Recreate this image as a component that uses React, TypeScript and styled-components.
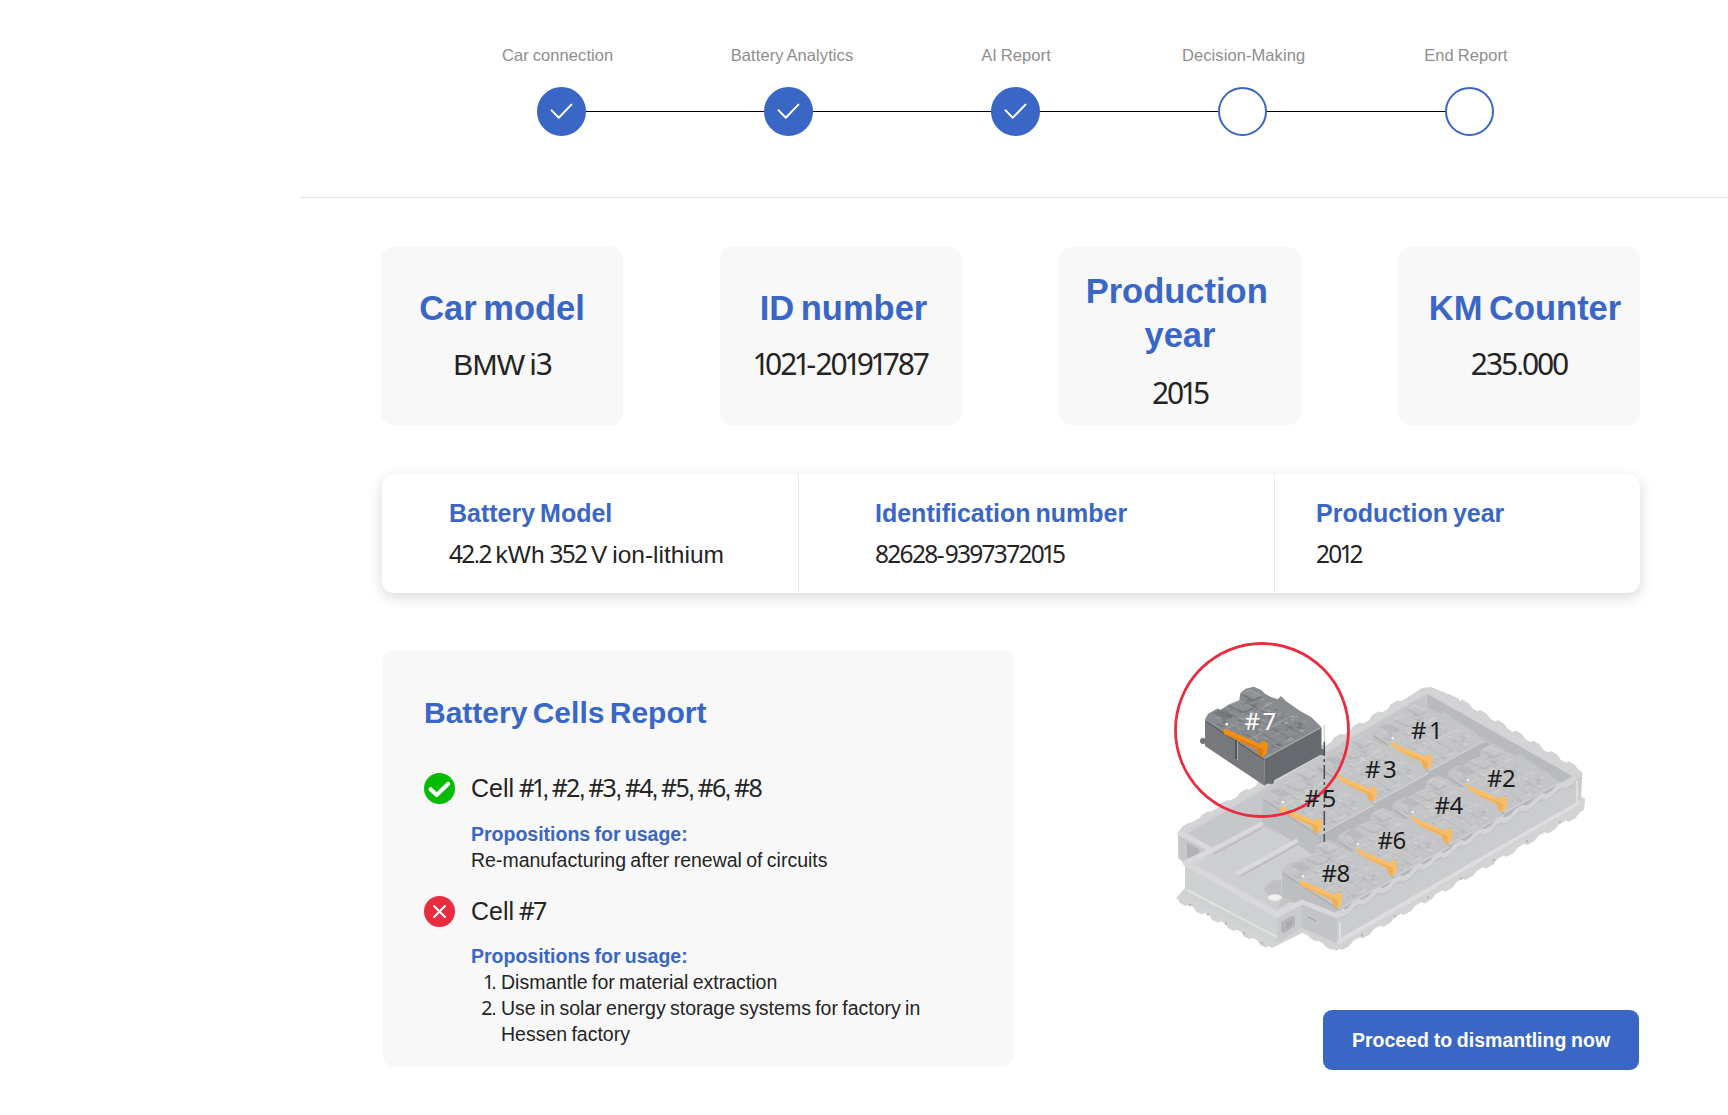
import React from "react";
import styled, { createGlobalStyle, css } from "styled-components";

const BLUE = "#3a66c6";
const INK = "#242424";
const SURFACE = "#f8f8f8";
const RED = "#e92c40";

const GlobalStyle = createGlobalStyle`
  *, *::before, *::after { box-sizing: border-box; }
  body {
    margin: 0;
    background: #fff;
    color: ${INK};
    font-family: "Liberation Sans", Arial, sans-serif;
  }
  h1, h2, h3, p, ol { margin: 0; padding: 0; }
`;

/* ---------- text with humanist numerals ---------- */

const Digits = styled.span`
  font-family: "Noto Sans", sans-serif;
  line-height: 0;
  letter-spacing: -0.07em;
`;

const DigitOne = styled(Digits)`
  margin-left: -0.05em;
  letter-spacing: -0.155em;
`;

const Point = styled.span`
  letter-spacing: -0.08em;
`;

function Numerals({ children }: { children: string }) {
  const runs = children.match(/1|[02-9#]+|[.,]|[^0-9#.,]+/g) ?? [];
  return (
    <>
      {runs.map((run, i) => {
        if (run === "1") return <DigitOne key={i}>{run}</DigitOne>;
        if (/^[0-9#]/.test(run)) return <Digits key={i}>{run}</Digits>;
        if (/^[.,]$/.test(run)) return <Point key={i}>{run}</Point>;
        return <React.Fragment key={i}>{run}</React.Fragment>;
      })}
    </>
  );
}

/* ---------- page ---------- */

const Page = styled.main`
  min-height: 1115px;
  padding-left: 300px;
  background: #fff;
`;

const Content = styled.div`
  padding: 49px 88px 0 81px;
`;

/* ---------- stepper ---------- */

const StepperBar = styled.header`
  display: flex;
  flex-direction: column;
  height: 198px;
  padding: 45px 0 0 202px;
  border-bottom: 1px solid #e4e4e4;
`;

const StepLabels = styled.div`
  display: flex;
  height: 20px;
`;

const StepLabel = styled.span<{ $before: number; $width: number }>`
  width: ${(p) => p.$width}px;
  margin-left: ${(p) => p.$before}px;
  color: #8e8e8e;
  font-size: 16.5px;
  line-height: 20px;
  letter-spacing: 0.08px;
  word-spacing: -0.8px;
  text-align: center;
  white-space: nowrap;
`;

const StepTrack = styled.div`
  display: flex;
  align-items: center;
  margin: 22px 0 0 35px;
`;

const StepDot = styled.span<{ $done: boolean }>`
  display: flex;
  align-items: center;
  justify-content: center;
  width: 49px;
  height: 49px;
  border: 2px solid ${BLUE};
  border-radius: 50%;
  background: ${(p) => (p.$done ? BLUE : "#fff")};
`;

const StepLine = styled.span`
  width: 178px;
  height: 1px;
  background: #000;
`;

const steps = [
  { label: "Car connection", done: true, before: 0, width: 111 },
  { label: "Battery Analytics", done: true, before: 117, width: 124 },
  { label: "AI Report", done: true, before: 127, width: 70 },
  { label: "Decision-Making", done: false, before: 131, width: 122 },
  { label: "End Report", done: false, before: 120, width: 84 },
];

function Stepper() {
  return (
    <StepperBar>
      <StepLabels>
        {steps.map((s) => (
          <StepLabel key={s.label} $before={s.before} $width={s.width}>
            {s.label}
          </StepLabel>
        ))}
      </StepLabels>
      <StepTrack>
        {steps.map((s, i) => (
          <React.Fragment key={s.label}>
            {i > 0 && <StepLine />}
            <StepDot $done={s.done}>
              {s.done && (
                <svg width="23" height="17" viewBox="0 0 23 17" fill="none">
                  <path d="M1.6 7.4 L8.8 14.8 L21.4 1.6" stroke="#fff" strokeWidth="2" strokeLinecap="round" strokeLinejoin="round" />
                </svg>
              )}
            </StepDot>
          </React.Fragment>
        ))}
      </StepTrack>
    </StepperBar>
  );
}

/* ---------- car cards ---------- */

const CarCards = styled.section`
  display: flex;
  gap: 97px;
`;

const CarCard = styled.article<{ $top: number }>`
  width: 242px;
  height: 178px;
  padding-top: ${(p) => p.$top}px;
  border-radius: 12px;
  background: ${SURFACE};
  text-align: center;
`;

const CarTitle = styled.h2<{ $shift: number }>`
  padding-left: ${(p) => p.$shift}px;
  color: ${BLUE};
  font-size: 34.5px;
  line-height: 44px;
  word-spacing: -3px;
  white-space: pre-line;
`;

const CarValue = styled.p<{ $gap: number }>`
  margin-top: ${(p) => p.$gap}px;
  font-size: 30px;
  line-height: 43px;
  letter-spacing: -0.025em;
  word-spacing: -2px;
`;

const carFacts = [
  { title: "Car model", value: "BMW i3", top: 39, shift: 0, gap: 13 },
  { title: "ID number", value: "1021-20191787", top: 39, shift: 5, gap: 13 },
  { title: "Production\u00a0\nyear", value: "2015", top: 22, shift: 0, gap: 15 },
  { title: "KM Counter", value: "235.000", top: 39, shift: 12, gap: 13 },
];

/* ---------- battery strip ---------- */

const BatteryStrip = styled.section`
  display: grid;
  grid-template-columns: 417px 476px 1fr;
  width: 1258px;
  height: 119px;
  margin: 49px 0 0 1px;
  border-radius: 12px;
  background: #fff;
  box-shadow: 0 4px 14px rgba(0, 0, 0, 0.16);
`;

const BatteryFact = styled.div<{ $indent: number; $ruled: boolean }>`
  padding: 24px 0 0 ${(p) => p.$indent}px;
  ${(p) =>
    p.$ruled &&
    css`
      border-right: 1px solid #ebebeb;
    `}
`;

const BatteryTitle = styled.h3`
  color: ${BLUE};
  font-size: 25px;
  line-height: 30px;
  word-spacing: -2px;
`;

const BatteryValue = styled.p`
  margin-top: 12px;
  font-size: 24.5px;
  line-height: 30px;
  word-spacing: -2px;
  white-space: nowrap;
`;

const batteryFacts = [
  { title: "Battery Model", value: "42.2 kWh 352 V ion-lithium", indent: 67 },
  { title: "Identification number", value: "82628-9397372015", indent: 76 },
  { title: "Production year", value: "2012", indent: 41 },
];

/* ---------- report ---------- */

const Lower = styled.section`
  display: flex;
  align-items: flex-start;
  justify-content: space-between;
  padding: 37px 1px 0 2px;
`;

const Report = styled.article`
  width: 631px;
  height: 417px;
  margin-top: 20px;
  padding: 45px 40px 0;
  border-radius: 12px;
  background: ${SURFACE};
`;

const ReportTitle = styled.h1`
  padding-left: 1px;
  color: ${BLUE};
  font-size: 30px;
  line-height: 36px;
  word-spacing: -3px;
`;

const CellRow = styled.div<{ $gap: number }>`
  display: flex;
  align-items: center;
  gap: 16px;
  height: 31px;
  margin: ${(p) => p.$gap}px 0 0 1px;
  font-size: 25px;
  line-height: 31px;
  word-spacing: -2.4px;
  white-space: nowrap;
`;

const Usage = styled.div<{ $gap: number }>`
  margin: ${(p) => p.$gap}px 0 0 48px;
  font-size: 19.5px;
  line-height: 26px;
  word-spacing: -1.1px;
`;

const UsageTitle = styled.h3`
  color: ${BLUE};
  font-size: 19.5px;
  line-height: 26px;
`;

const UsageList = styled.ol`
  display: grid;
  grid-template-columns: 24px 1fr;
  column-gap: 6px;
  list-style: none;
`;

const UsageItem = styled.li`
  display: contents;
`;

const UsageNumber = styled.span`
  text-align: right;
`;

function OkIcon() {
  return (
    <svg width="31" height="31" viewBox="0 0 31 31" fill="none">
      <circle cx="15.5" cy="15.5" r="15.5" fill="#04bb06" />
      <path d="M6.6 16.2 L12.7 22 L24.2 10.8" stroke="#fff" strokeWidth="4" strokeLinecap="round" strokeLinejoin="round" />
    </svg>
  );
}

function FailIcon() {
  return (
    <svg width="31" height="31" viewBox="0 0 31 31" fill="none">
      <circle cx="15.5" cy="15.5" r="15.5" fill={RED} />
      <path d="M10 10 L21 21 M21 10 L10 21" stroke="#fff" strokeWidth="2.1" strokeLinecap="round" />
    </svg>
  );
}

/* ---------- battery drawing ---------- */

const Side = styled.div`
  display: flex;
  flex-direction: column;
  align-items: flex-end;
  width: 479px;
`;

const Drawing = styled.svg`
  display: block;
  width: 479px;
  height: 330px;
`;

const CellLabel = styled.text<{ $light?: boolean }>`
  fill: ${(p) => (p.$light ? "#fff" : "#1c1c1c")};
  font-family: "Noto Sans", sans-serif;
  font-size: 24px;
  letter-spacing: -0.6px;
  word-spacing: -2.5px;
`;

const Proceed = styled.button`
  width: 316px;
  height: 60px;
  margin-top: 50px;
  padding: 0;
  border: 0;
  border-radius: 9px;
  background: ${BLUE};
  color: #fff;
  font: bold 19.5px/26px "Liberation Sans", Arial, sans-serif;
  word-spacing: -0.6px;
`;

type Pt = [number, number];

// Small repeatable generator, so the surface detail is the same on every load.
function sequence(seed: number) {
  let s = seed;
  return () => {
    s = (s * 16807) % 2147483647;
    return s / 2147483647;
  };
}

// Maps (u, v) in the unit square to a module's top face.
const onFace = (u: number, v: number): Pt => [47 * u + 57 * v + 8 * u * v, -27 * u + 38 * v - 3 * u * v];

const facets = (() => {
  const rnd = sequence(77);
  return Array.from({ length: 130 }, () => {
    const u = 0.04 + rnd() * 0.88;
    const v = 0.04 + rnd() * 0.88;
    const du = 0.02 + rnd() * 0.05;
    const dv = 0.02 + rnd() * 0.05;
    const corners = [onFace(u, v), onFace(u + du, v), onFace(u + du, v + dv), onFace(u, v + dv)];
    return {
      points: corners.map((c) => c.map((n) => n.toFixed(1)).join(",")).join(" "),
      light: rnd() > 0.45,
      strength: 0.15 + rnd() * 0.4,
    };
  });
})();

const seams = [0.18, 0.36, 0.54, 0.72].map((u) => [onFace(u, 0.03), onFace(u, 0.97)]);
const crossSeams = [0.3, 0.62].map((v) => [onFace(0.03, v), onFace(0.97, v)]);

function Module({ x, y, dark = false }: { x: number; y: number; dark?: boolean }) {
  const tone = dark
    ? { top: "#888b8f", left: "#77797d", right: "#66696d", hi: "#b4b7ba", lo: "#606367", arm: "#f18e16", armLo: "#c96c0b" }
    : { top: "#c4c5c7", left: "#bdbec0", right: "#b6b7ba", hi: "#d9dadc", lo: "#adaeb1", arm: "#f8bd68", armLo: "#e8a54b" };
  const depth = dark ? 26 : 24;
  return (
    <g transform={`translate(${x} ${y})${dark ? " scale(1.04)" : ""}`}>
      <path d={`M0 0 L57 38 V${38 + depth} L0 ${depth} Z`} fill={tone.left} />
      <path d={`M57 38 L112 8 V${8 + depth} L57 ${38 + depth} Z`} fill={tone.right} />
      <path
        d="M0 0 L3 -5 L12 -10 L15 -9 L23 -14 L33 -18 L34 -25 L39 -29 L47 -31 L54 -28 L58 -24 L64 -21 L70 -19 L73 -22 L78 -17 L91 -8 L102 -2 L112 8 L57 38 Z"
        fill={tone.top}
      />
      {seams.map(([a, b], i) => (
        <line key={i} x1={a[0]} y1={a[1]} x2={b[0]} y2={b[1]} stroke={tone.lo} strokeWidth="0.9" opacity="0.45" />
      ))}
      {crossSeams.map(([a, b], i) => (
        <line key={i} x1={a[0]} y1={a[1]} x2={b[0]} y2={b[1]} stroke={tone.hi} strokeWidth="0.9" opacity="0.5" />
      ))}
      {facets.map((f, i) => (
        <polygon key={i} points={f.points} fill={f.light ? tone.hi : tone.lo} opacity={f.strength} />
      ))}
      <g fill={tone.lo} opacity="0.45">
        <path d="M35 -23 l8 -4 12 6 -8 5z M22 -12 l10 -5 14 7 -9 5z M8 -6 l8 -3 12 6 -8 4z" />
      </g>
      <g fill={tone.hi} opacity="0.4">
        <path d="M35 -25 l8 -4 12 6 -8 4z M22 -14 l10 -4 14 7 -9 4z" />
      </g>
      <path d="M57 38 L112 8" stroke={tone.hi} strokeWidth="1.2" opacity="0.7" />
      <path d="M2 3 L57 39" stroke={tone.lo} strokeWidth="1.4" />
      <circle cx="21" cy="5" r="1.3" fill="#f2f2f2" />
      <path d="M17.5 10.5 L20 9.4 L52 23.5 L57 21 L60.5 24 L59.5 33 L55.5 37 L51 34 L50 29.5 L18.5 14.5 Z" fill={tone.arm} />
      <path d="M18 13.5 L50 28.5 L51 34 L55.5 37 L56 29 L50 26.5 Z" fill={tone.armLo} opacity="0.6" />
    </g>
  );
}

// Breaks a straight edge into a row of shallow mounting tabs.
function tabs(from: Pt, to: Pt, count: number, lift: number): string {
  let d = "";
  for (let i = 0; i < count; i++) {
    const at = (t: number, h: number) => {
      const k = (i + t) / count;
      return `L${(from[0] + (to[0] - from[0]) * k).toFixed(1)} ${(from[1] + (to[1] - from[1]) * k + h).toFixed(1)}`;
    };
    d += at(0.1, 0) + at(0.25, lift) + at(0.6, lift) + at(0.8, 0);
  }
  return d + `L${to[0]} ${to[1]}`;
}

function Tray() {
  return (
    <g>
      {/* mounting flange under the walls */}
      <path
        d={`M1176 898 ${tabs([1176, 898], [1272, 948], 6, 3)} L1302 933 ${tabs([1306, 934], [1337, 951], 2, 2)} ${tabs([1337, 950], [1584, 810], 12, 3)} L1585 799 L1578 795 L1337 934 L1302 918 L1277 936 L1185 888 Z`}
        fill="#d2d3d5"
      />
      {/* outer silhouette */}
      <path
        d={`M1178 832 ${tabs([1178, 832], [1405, 699], 12, -3)} L1422 688 L1431 687 L1458 698 ${tabs([1458, 700], [1582, 772], 7, -3)} L1581 804 L1337 945 L1302 928 L1276 944 L1185 896 V864 L1178 858 Z`}
        fill="url(#trayWall)"
      />
      {/* floor and inner walls */}
      <path d="M1189 833 L1427 694 L1572 776 L1337 910 L1302 896 L1277 909 L1199 865 L1218 851 Z" fill="#c3c4c6" />
      <path d="M1427 694 L1572 776 L1562 783 L1427 707 Z" fill="#b9babc" />
      <path d="M1189 833 L1427 694 V707 L1262 803 V826 L1214 851 Z" fill="#c6c7c9" />
      <path d="M1212 852 L1262 826 L1320 852 L1284 872 L1280 903 L1277 909 L1199 865 Z" fill="#cdced0" />
      <path d="M1264 889 q8 -12 17 -8 v18 q-11 2 -17 -10z" fill="#bfc0c3" />
      <ellipse cx="1275" cy="897.5" rx="7" ry="3.2" fill="#f0f0f1" />
      {/* channel between the two module columns */}
      <path d="M1488 742 L1492 752 L1326 850 L1319 846 V835 Z" fill="#b1b2b5" />
    </g>
  );
}

function FloorRibs() {
  return (
    <g>
      <path d="M1214 854 L1262 828 M1241 876 L1298 844" stroke="#b6b7ba" strokeWidth="1.4" />
      <path d="M1212 850 L1261 824 M1238 873 L1296 841" stroke="#d9dadc" strokeWidth="4" strokeLinecap="round" />
    </g>
  );
}

function TrayFront() {
  return (
    <g>
      <path d="M1337 917 L1582 776 L1580 803 L1337 943 Z" fill="#cbccce" />
      <path d="M1337 940 L1580 800 V804 L1337 945 Z" fill="#dcddde" />
      <path d="M1340 922 V941 M1577 781 V803" stroke="#dedfe0" strokeWidth="2" />
      <path d="M1302 905 L1337 919 V943 L1302 928 Z" fill="#c3c4c6" />
      <path d="M1277 917 L1302 905 V928 L1277 943 Z" fill="#c9cacc" />
      <path d="M1185 864 L1277 917 V943 L1185 896 Z" fill="#ced0d1" />
      <path d="M1187 890 L1277 937" stroke="#dfe0e1" strokeWidth="2.5" />
      <path d="M1178 834 L1212 851 L1186 864 L1180 858 Z" fill="#c6c7ca" />
      <path d="M1187 843 l12 6 v4 l-10 5 -2 -1z" fill="#b1b2b5" />
      <path d="M1281 922 l11 -6 q3 0 3 3 v7 l-11 7 q-3 0 -3 -3z" fill="#b3b4b7" />
      <path d="M1286 923 l6 -3 v5 l-6 3z" fill="#a6a7aa" />
      <path d="M1308 917 l8 4" stroke="#a3a4a7" strokeWidth="1.3" />
      <path d="M1178 832 L1212 850 L1185 863 L1277 915 L1302 902 L1337 916 L1345 910" fill="none" stroke="#d8d9db" strokeWidth="5" strokeLinejoin="round" />
      <path d={`M1337 914 ${tabs([1337, 914], [1582, 773], 12, 3)}`} fill="none" stroke="#d4d5d7" strokeWidth="4.5" strokeLinejoin="round" />
      <path d={`M1337 918 ${tabs([1337, 918], [1580, 778], 12, 3)}`} fill="none" stroke="#bdbec0" strokeWidth="0.8" />
      <path d="M1181 831 L1428 690 L1580 773" fill="none" stroke="#d3d4d6" strokeWidth="4" strokeLinejoin="round" />
      <g fill="#b5b6b9">
        {[0, 1, 2, 3, 4].map((i) => (
          <circle key={i} cx={1190 + i * 18} cy={905 + i * 9.4} r="1.2" />
        ))}
        {[0, 1, 2, 3, 4, 5, 6].map((i) => (
          <circle key={i} cx={1362 + i * 33} cy={935 - i * 18.8} r="1.2" />
        ))}
      </g>
    </g>
  );
}

function BatteryDrawing() {
  return (
    <Drawing viewBox="1160 630 479 330">
      <defs>
        <linearGradient id="trayWall" x1="0" y1="0" x2="1" y2="1">
          <stop offset="0" stopColor="#cfd0d2" />
          <stop offset="0.6" stopColor="#d3d4d6" />
          <stop offset="1" stopColor="#c8c9cb" />
        </linearGradient>
      </defs>
      <Tray />
      <Module x={1372} y={733} />
      <Module x={1317} y={765} />
      <Module x={1262} y={797} />
      <FloorRibs />
      <Module x={1447} y={775} />
      <Module x={1392} y={807} />
      <Module x={1337} y={839} />
      <Module x={1282} y={871} />
      <TrayFront />
      <g fill="#707276">
        <circle cx="1203" cy="741" r="3" />
        <circle cx="1271" cy="781" r="3.2" />
        <circle cx="1322" cy="752" r="3.2" />
      </g>
      <Module x={1205} y={719} dark />
      <path d="M1236 740 V759" stroke="#55575b" strokeWidth="2" />
      <path d="M1237.5 742 V760" stroke="#a6a8ab" strokeWidth="1" />
      <path d="M1324.3 725 V742" stroke="#d4d4d5" strokeWidth="1.4" />
      <path d="M1324.3 742 V842" stroke="#4c4d50" strokeWidth="1.5" strokeDasharray="14 3 3 3" />
      <circle cx="1262" cy="730" r="86.5" fill="none" stroke={RED} strokeWidth="2.8" />
      <CellLabel x="1411" y="739"># 1</CellLabel>
      <CellLabel x="1487" y="787">#2</CellLabel>
      <CellLabel x="1365" y="778"># 3</CellLabel>
      <CellLabel x="1434.5" y="814">#4</CellLabel>
      <CellLabel x="1304.5" y="807"># 5</CellLabel>
      <CellLabel x="1377.5" y="849">#6</CellLabel>
      <CellLabel x="1244.5" y="730" $light># 7</CellLabel>
      <CellLabel x="1321.5" y="882">#8</CellLabel>
    </Drawing>
  );
}

export default function App() {
  return (
    <Page>
      <GlobalStyle />
      <Stepper />
      <Content>
        <CarCards>
          {carFacts.map((f) => (
            <CarCard key={f.title} $top={f.top}>
              <CarTitle $shift={f.shift}>{f.title}</CarTitle>
              <CarValue $gap={f.gap}><Numerals>{f.value}</Numerals></CarValue>
            </CarCard>
          ))}
        </CarCards>
        <BatteryStrip>
          {batteryFacts.map((f, i) => (
            <BatteryFact key={f.title} $indent={f.indent} $ruled={i < batteryFacts.length - 1}>
              <BatteryTitle>{f.title}</BatteryTitle>
              <BatteryValue><Numerals>{f.value}</Numerals></BatteryValue>
            </BatteryFact>
          ))}
        </BatteryStrip>
        <Lower>
          <Report>
            <ReportTitle>Battery Cells Report</ReportTitle>
            <CellRow $gap={42}>
              <OkIcon />
              <span><Numerals>Cell #1, #2, #3, #4, #5, #6, #8</Numerals></span>
            </CellRow>
            <Usage $gap={17}>
              <UsageTitle>Propositions for usage:</UsageTitle>
              <p>Re-manufacturing after renewal of circuits</p>
            </Usage>
            <CellRow $gap={23}>
              <FailIcon />
              <span><Numerals>Cell #7</Numerals></span>
            </CellRow>
            <Usage $gap={16}>
              <UsageTitle>Propositions for usage:</UsageTitle>
              <UsageList>
                <UsageItem>
                  <UsageNumber><Numerals>1.</Numerals></UsageNumber>
                  <span>Dismantle for material extraction</span>
                </UsageItem>
                <UsageItem>
                  <UsageNumber><Numerals>2.</Numerals></UsageNumber>
                  <span>Use in solar energy storage systems for factory in Hessen factory</span>
                </UsageItem>
              </UsageList>
            </Usage>
          </Report>
          <Side>
            <BatteryDrawing />
            <Proceed type="button">Proceed to dismantling now</Proceed>
          </Side>
        </Lower>
      </Content>
    </Page>
  );
}
